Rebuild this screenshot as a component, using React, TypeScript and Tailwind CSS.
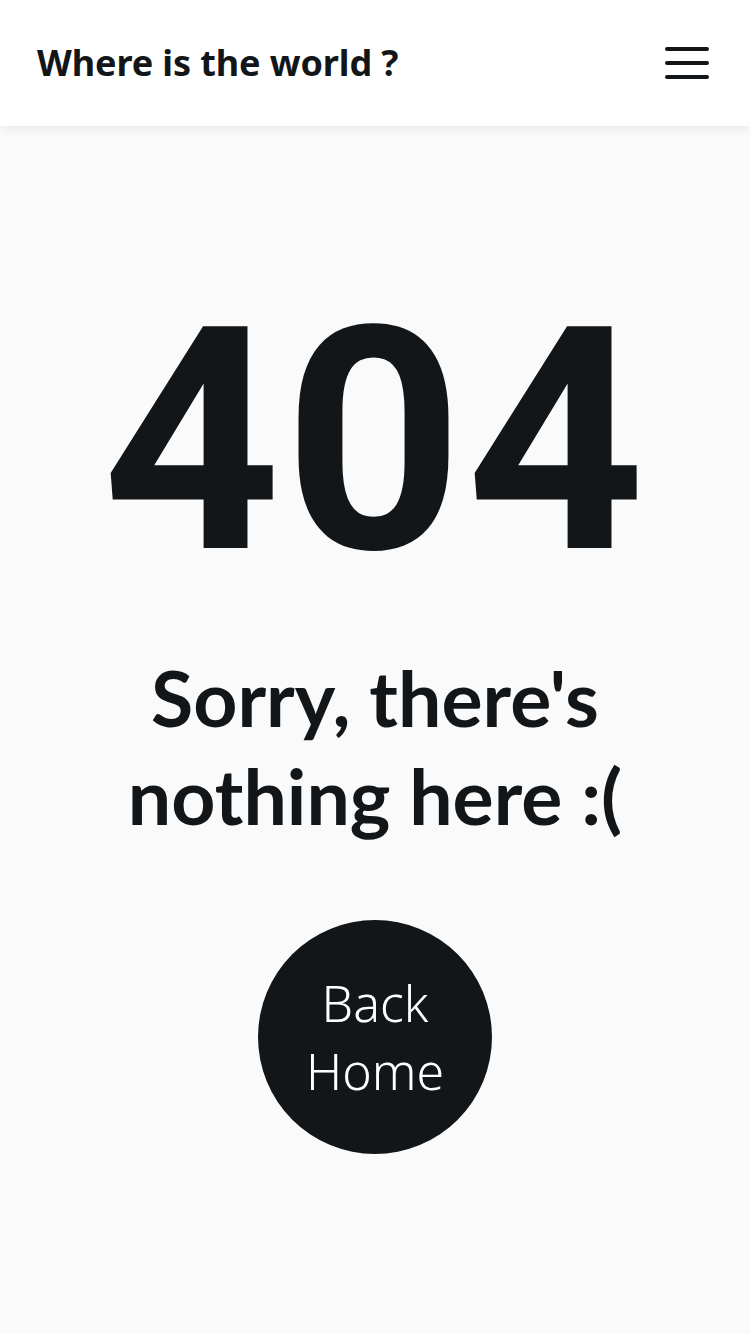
import React from 'react';

const App: React.FC = () => {
  return (
    <div className="min-h-screen w-full bg-[#fafafa] text-[#121619] font-['Noto_Sans',sans-serif]">
      {/* header */}
      <header className="flex h-[126px] items-center justify-between bg-white px-[37px] shadow-[0_2px_10px_rgba(0,0,0,0.08)]">
        <h1 className="text-[36px] font-bold leading-none tracking-[-0.1px]">Where is the world ?</h1>
        <button className="mr-[4px] flex w-[44px] flex-col gap-[10px]">
          <span className="h-[4px] w-full rounded-full bg-[#121619]"></span>
          <span className="h-[4px] w-full rounded-full bg-[#121619]"></span>
          <span className="h-[4px] w-full rounded-full bg-[#121619]"></span>
        </button>
      </header>

      {/* 404 */}
      <main className="flex flex-col items-center pt-[160px]">
        <div className="font-['Roboto',sans-serif] text-[312px] font-bold leading-none tracking-[3px]">404</div>
        <h2 className="mt-[50px] text-center font-['Lato',sans-serif] text-[77px] font-bold leading-[98px]">
          Sorry, there's
          <br />
          nothing here :(
        </h2>
        <button className="mt-[76px] flex h-[234px] w-[234px] items-center justify-center rounded-full bg-[#121619] text-center text-[50px] font-light leading-[68px] text-white">
          Back
          <br />
          Home
        </button>
      </main>
    </div>
  );
};

export default App;
